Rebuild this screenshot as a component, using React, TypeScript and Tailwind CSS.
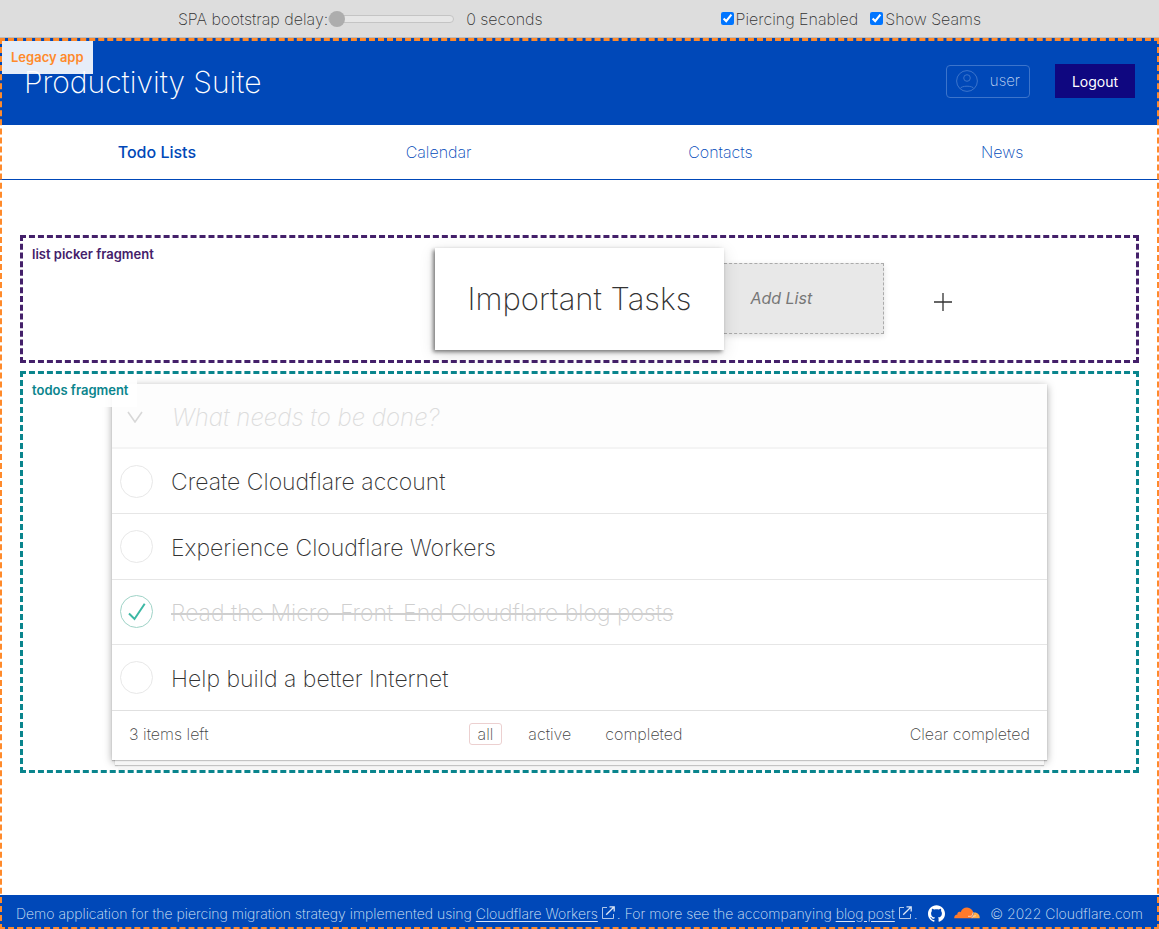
import { useState } from "react";
import { SiGithub } from "react-icons/si";

type Todo = { text: string; done: boolean };

const initialTodos: Todo[] = [
  { text: "Create Cloudflare account", done: false },
  { text: "Experience Cloudflare Workers", done: false },
  { text: "Read the Micro-Front-End Cloudflare blog posts", done: true },
  { text: "Help build a better Internet", done: false },
];

function SeamLabel({ text, className }: { text: string; className: string }) {
  return (
    <span className={`absolute z-20 bg-white/90 px-[9px] pt-1.5 text-[13px] leading-5 font-semibold ${className}`}>
      {text}
    </span>
  );
}

function ExternalIcon() {
  return (
    <svg viewBox="0 0 14 14" className="mr-0.5 ml-[3px] inline-block size-3.5 align-[-1px]" fill="none" stroke="currentColor">
      <path d="M6 1.5H1.5v11h11V8" strokeWidth="1" opacity="0.8" />
      <path d="M8.5 .8h4.7v4.7M13 1 5.2 8.8" strokeWidth="1.3" />
    </svg>
  );
}

function CloudflareLogo() {
  return (
    <svg viewBox="0 0 26 12" className="h-3 w-[26px]" aria-label="Cloudflare">
      <path
        fill="#ff7a2b"
        d="M.2 11.3C0 8.9 1.600 7.500 3.400 7.400 3.100 5.600 5 4.200 6.700 5.200 7.500 2.200 10.200.3 13.100.4c3 .1 5.400 2 6.200 4.900l-.9 6z"
      />
      <path fill="#ffab47" d="M18.300 11.300l1.500-5.700c3.600-.5 6.200 2.300 5.900 5.700z" />
      <path stroke="#fff" strokeWidth=".8" fill="none" d="M14 9.300h2.500c1.200 0 1.600-.6 2-1.800l.8-2.200M18 11.200c.4-1.600.8-2 2.300-2.200l1.500-.2" opacity=".8" />
    </svg>
  );
}

function Toolbar() {
  return (
    <div className="flex h-[38px] items-center justify-evenly border-b border-[#bdbdbd] bg-[#ddd]">
      <div className="flex items-center">
        <label htmlFor="delay">SPA bootstrap delay:</label>
        <input
          id="delay"
          type="range"
          min={0}
          max={10}
          defaultValue={0}
          className="h-4 w-[126px] appearance-none bg-transparent [&::-webkit-slider-runnable-track]:h-2 [&::-webkit-slider-runnable-track]:rounded-full [&::-webkit-slider-runnable-track]:border [&::-webkit-slider-runnable-track]:border-[#c4c4c4] [&::-webkit-slider-runnable-track]:bg-[#e6e6e6] [&::-webkit-slider-thumb]:-mt-[5px] [&::-webkit-slider-thumb]:size-4 [&::-webkit-slider-thumb]:appearance-none [&::-webkit-slider-thumb]:rounded-full [&::-webkit-slider-thumb]:bg-[#adadad]"
        />
        <output htmlFor="delay" className="ml-3">0 seconds</output>
      </div>
      <div className="flex items-center gap-3">
        <label className="flex items-center gap-0.5">
          <input type="checkbox" defaultChecked className="size-[13px]" />
          Piercing Enabled
        </label>
        <label className="flex items-center gap-0.5">
          <input type="checkbox" defaultChecked className="size-[13px]" />
          Show Seams
        </label>
      </div>
    </div>
  );
}

function Header() {
  return (
    <header className="flex h-[87px] items-center justify-between bg-[#0048b8] px-6 pb-px text-white">
      <h1 className="pt-px text-[30px] leading-10 font-extralight">Productivity Suite</h1>
      <div className="flex items-center gap-[25px]">
        <div className="flex h-[33px] items-center gap-3 rounded border border-[#3c74cb] px-[9px] text-[15px] text-[#c3d5f0]">
          <svg viewBox="0 0 22 22" className="size-[22px]" fill="none" stroke="#3c74cb">
            <circle cx="11" cy="11" r="10.400" />
            <circle cx="11" cy="8" r="3.300" />
            <path d="M4 18.600c1.500-3.200 12.500-3.200 14 0" />
          </svg>
          user
        </div>
        <button className="h-[34px] w-20 bg-[#0f0780] pt-px text-sm font-normal">Logout</button>
      </div>
    </header>
  );
}

function Nav() {
  return (
    <nav className="grid h-[55px] grid-cols-4 items-center border-b border-[#0048b8] px-4 text-center text-[#0048b8]">
      <a href="#todos" className="font-medium">Todo Lists</a>
      <a href="#calendar">Calendar</a>
      <a href="#contacts">Contacts</a>
      <a href="#news">News</a>
    </nav>
  );
}

function ListPicker() {
  return (
    <section className="relative border-[3px] border-dashed border-[#44206a] py-2.5">
      <SeamLabel text="list picker fragment" className="top-0 left-0 pb-[7px] text-[#44206a]" />
      <div className="grid grid-cols-[1fr_auto_1fr] items-center">
        <h2 className="relative z-10 col-start-2 flex h-[102px] items-center bg-white px-[33px] text-[31px] font-extralight text-[#333] shadow-[-2px_2px_4px_rgba(0,0,0,0.5),0_4px_16px_rgba(0,0,0,0.12)]">
          Important Tasks
        </h2>
        <form className="flex items-center pb-0.5" onSubmit={(e) => e.preventDefault()}>
          <input
            aria-label="Add List"
            placeholder="Add List"
            className="h-[71px] w-40 border border-l-0 border-dashed border-[#aaa] bg-[#e8e8e8] px-[26px] text-base font-normal italic shadow-[0_2px_6px_rgba(0,0,0,0.12)] placeholder:text-[#777]"
          />
          <button aria-label="Add" className="mt-2 ml-12 p-0.5">
            <svg viewBox="0 0 18 18" className="size-[18px]" stroke="#333" strokeWidth="1.300">
              <path d="M9 0v18M0 9h18" />
            </svg>
          </button>
        </form>
      </div>
    </section>
  );
}

function Todos() {
  const [todos, setTodos] = useState(initialTodos);
  const toggle = (index: number) =>
    setTodos(todos.map((todo, i) => (i === index ? { ...todo, done: !todo.done } : todo)));
  return (
    <section className="relative mt-2 px-[3px] pt-[13px] pb-[13px]">
      <div className="pointer-events-none absolute inset-0 z-10 border-[3px] border-dashed border-[#0a858d]" />
      <SeamLabel text="todos fragment" className="top-[3px] left-[3px] pb-[7px] text-[#0a858d]" />
      <div className="mx-auto w-[84%] bg-white shadow-[0_1px_1px_rgba(0,0,0,0.2),0_5px_0_-3px_#f6f6f6,0_8px_0_-3px_#f6f6f6,0_9px_1px_-3px_rgba(0,0,0,0.2),0_16px_0_-6px_#f6f6f6,0_2px_8px_rgba(0,0,0,0.35)]">
        <div className="flex h-[65px] items-center border-b-2 border-[#f4f4f4] bg-[#fdfdfd]">
          <button aria-label="Toggle all" className="ml-[15px] grid h-8 w-[45px] items-center pt-0.5">
            <svg viewBox="0 0 16 12" className="h-3 w-4" fill="none" stroke="#d8d8d8" strokeWidth="1.600">
              <path d="M1 1l7 10 7-10" />
            </svg>
          </button>
          <input
            aria-label="New todo"
            placeholder="What needs to be done?"
            className="h-full min-w-0 flex-1 bg-transparent pt-1 text-[24px] font-extralight italic outline-none placeholder:text-[#dcdcdc]"
          />
        </div>
        <ul className="grid h-[261px] grid-rows-4 divide-y divide-[#e6e6e6] text-[23px] font-extralight">
          {todos.map((todo, i) => (
            <li key={todo.text} className="flex items-center pl-2">
              <label className="flex items-center gap-[18px]">
                <span className="grid place-items-center">
                  <input
                    type="checkbox"
                    checked={todo.done}
                    onChange={() => toggle(i)}
                    className="col-start-1 row-start-1 size-[33px] appearance-none rounded-full border border-[#e8e8e8] checked:border-[#9fd3c7]"
                  />
                  {todo.done && (
                    <svg viewBox="0 0 18 18" className="pointer-events-none col-start-1 row-start-1 size-[18px]" fill="none" stroke="#3cb8a4" strokeWidth="2">
                      <path d="M1 10.500l5.500 5.500L16.700.7" />
                    </svg>
                  )}
                </span>
                <span className={todo.done ? "pt-[3px] text-[#cfcfcf] line-through decoration-2" : "pt-[3px] text-[#333]"}>{todo.text}</span>
              </label>
            </li>
          ))}
        </ul>
        <div className="grid h-[50px] grid-cols-[1fr_auto_1fr] items-center border-t border-[#e0e0e0] px-[17px] pb-1 text-[#444]">
          <span>3 items left</span>
          <div className="flex items-center gap-[18px]">
            <button className="h-[22px] rounded-[3px] border border-[#ecd0d0] px-2 leading-5">all</button>
            <button className="px-2">active</button>
            <button className="px-2">completed</button>
          </div>
          <button className="justify-self-end">Clear completed</button>
        </div>
      </div>
    </section>
  );
}

function Footer() {
  return (
    <footer className="flex h-[34px] items-center justify-between bg-[#0048b8] px-4 pt-0.5 text-[14px] whitespace-nowrap text-[#dbe6f6]">
      <p>
        Demo application for the piercing migration strategy implemented using{" "}
        <a href="#workers" className="underline underline-offset-2">Cloudflare Workers</a>
        <ExternalIcon />. For more see the accompanying{" "}
        <a href="#blog" className="underline underline-offset-2">blog post</a>
        <ExternalIcon />.
      </p>
      <a href="#github" aria-label="GitHub"><SiGithub className="size-[17px] text-white" /></a>
      <CloudflareLogo />
      <span>© 2022 Cloudflare.com</span>
    </footer>
  );
}

export default function App() {
  return (
    <div className="flex min-h-screen flex-col bg-white font-['Inter','Liberation_Sans',sans-serif] text-base font-extralight text-[#333]">
      <Toolbar />
      <div className="relative flex flex-1 flex-col overflow-hidden">
        <div className="pointer-events-none absolute -inset-x-px top-0 -bottom-px z-30 border-[3px] border-dashed border-[#ff8a2b]" />
        <SeamLabel text="Legacy app" className="top-[3px] left-0.5 pb-[7px] text-[#ff8a2b]" />
        <Header />
        <Nav />
        <main className="flex-1 px-5 pt-[55px] pb-8">
          <ListPicker />
          <Todos />
        </main>
        <Footer />
      </div>
    </div>
  );
}
